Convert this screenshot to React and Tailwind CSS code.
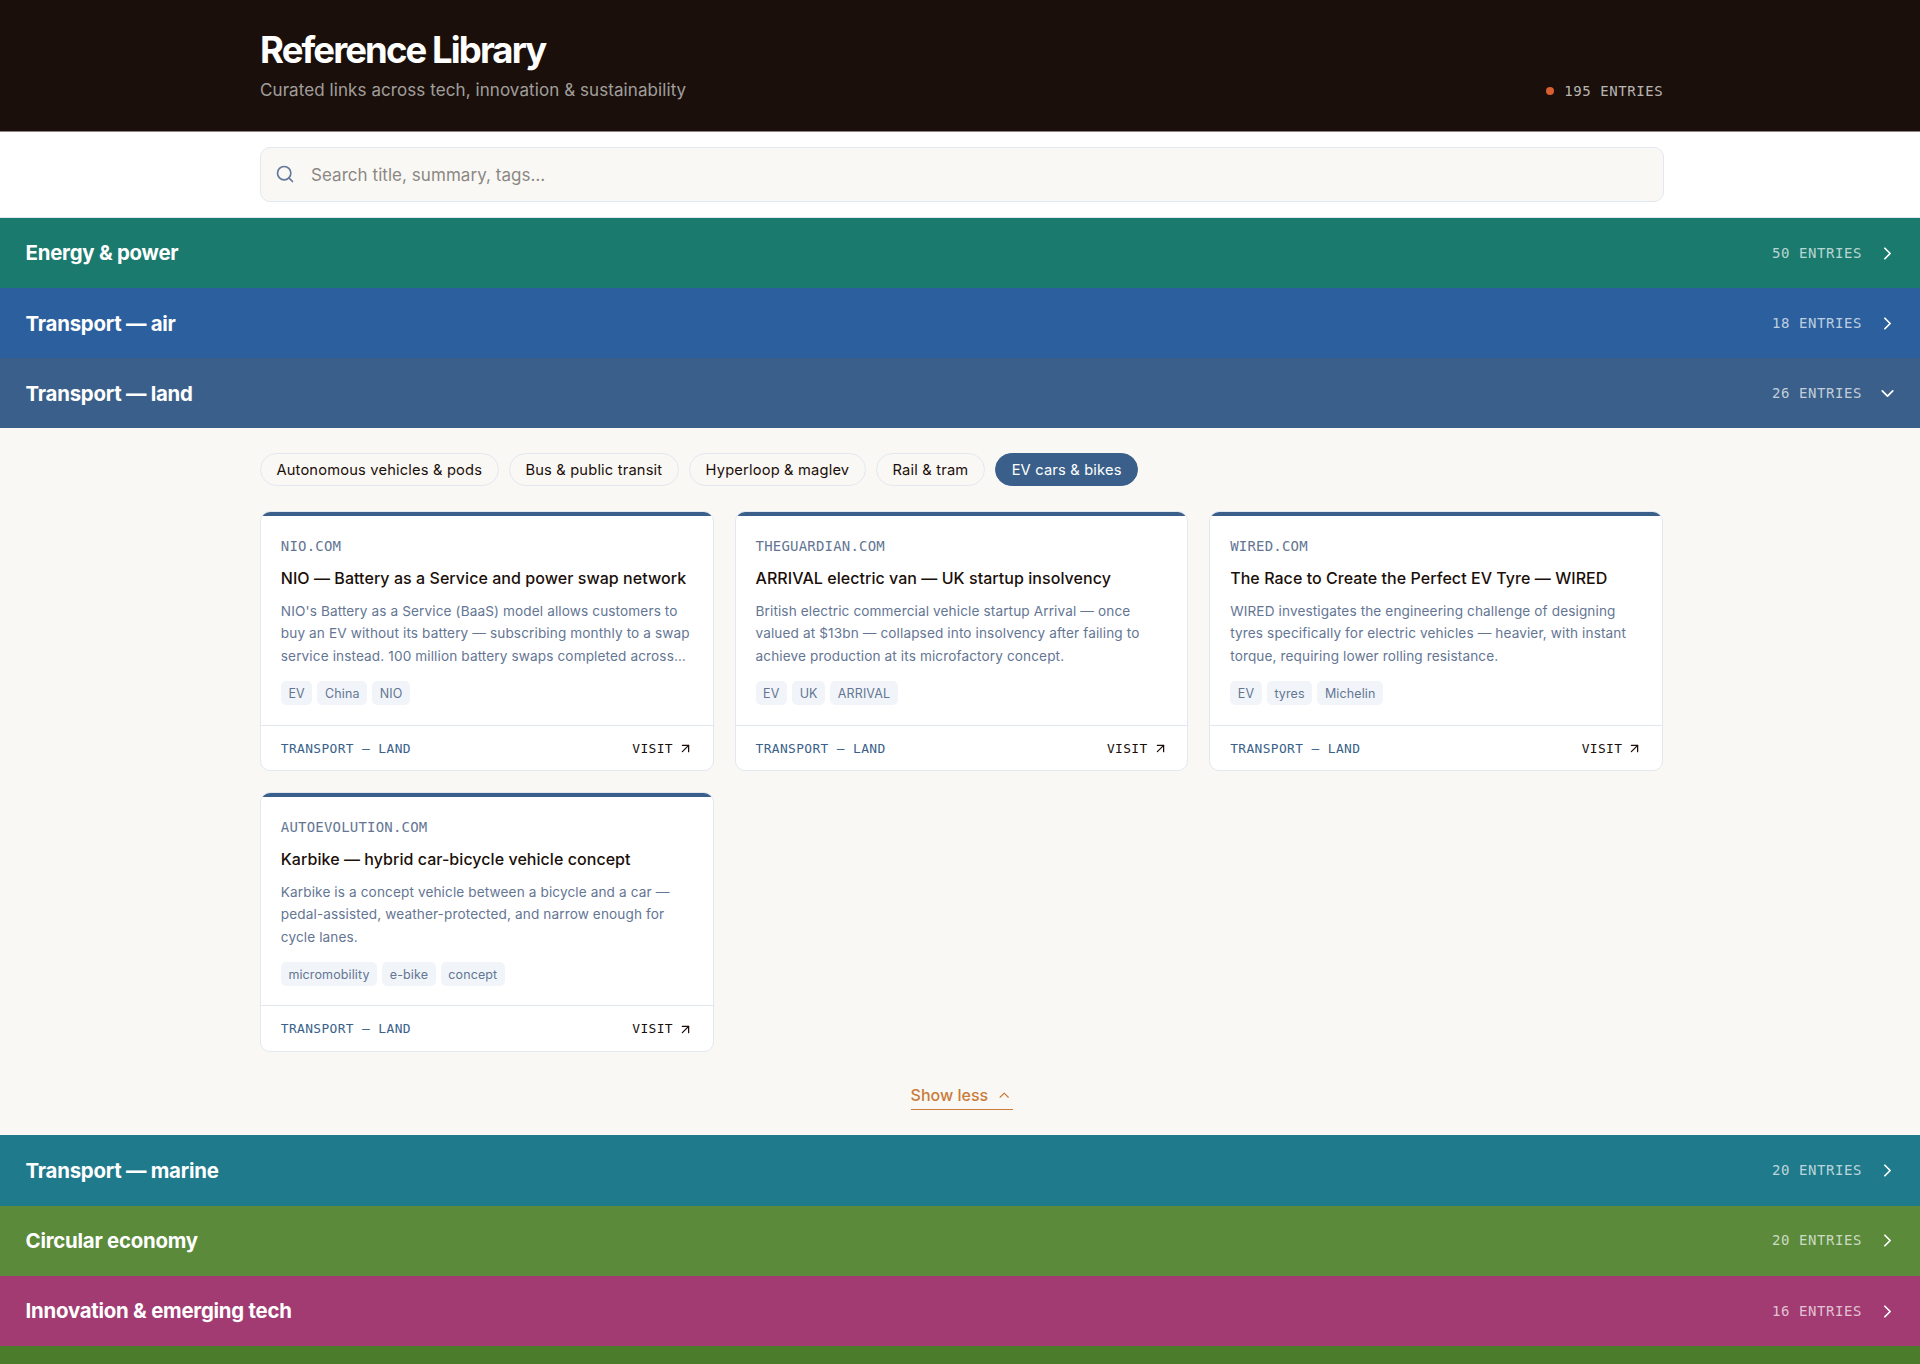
import { ArrowUpRight, ChevronDown, ChevronRight, ChevronUp, Search } from "lucide-react";

const topSections = [
  { name: "Energy & power", count: 50, color: "bg-[#1b7a6e]" },
  { name: "Transport — air", count: 18, color: "bg-[#2c5f9e]" },
  { name: "Transport — land", count: 26, color: "bg-[#3a5f8a]", open: true },
];

const bottomSections = [
  { name: "Transport — marine", count: 20, color: "bg-[#1f7a8c]" },
  { name: "Circular economy", count: 20, color: "bg-[#5a8a3a]" },
  { name: "Innovation & emerging tech", count: 16, color: "bg-[#a23b72]" },
];

const filters = ["Autonomous vehicles & pods", "Bus & public transit", "Hyperloop & maglev", "Rail & tram", "EV cars & bikes"];

const entries = [
  {
    domain: "nio.com",
    title: "NIO — Battery as a Service and power swap network",
    lines: [
      "NIO's Battery as a Service (BaaS) model allows customers to",
      "buy an EV without its battery — subscribing monthly to a swap",
      "service instead. 100 million battery swaps completed across…",
    ],
    tags: ["EV", "China", "NIO"],
  },
  {
    domain: "theguardian.com",
    title: "ARRIVAL electric van — UK startup insolvency",
    lines: [
      "British electric commercial vehicle startup Arrival — once",
      "valued at $13bn — collapsed into insolvency after failing to",
      "achieve production at its microfactory concept.",
    ],
    tags: ["EV", "UK", "ARRIVAL"],
  },
  {
    domain: "wired.com",
    title: "The Race to Create the Perfect EV Tyre — WIRED",
    lines: [
      "WIRED investigates the engineering challenge of designing",
      "tyres specifically for electric vehicles — heavier, with instant",
      "torque, requiring lower rolling resistance.",
    ],
    tags: ["EV", "tyres", "Michelin"],
  },
  {
    domain: "autoevolution.com",
    title: "Karbike — hybrid car-bicycle vehicle concept",
    lines: [
      "Karbike is a concept vehicle between a bicycle and a car —",
      "pedal-assisted, weather-protected, and narrow enough for",
      "cycle lanes.",
    ],
    tags: ["micromobility", "e-bike", "concept"],
  },
];

function SectionBar({ name, count, color, open }) {
  const Chevron = open ? ChevronDown : ChevronRight;
  return (
    <button className={`flex h-[70.2px] w-full items-center justify-between pl-[25.6px] pr-[22px] ${color}`}>
      <span className="pt-[1.6px] text-[20.4px] font-bold tracking-[-0.24px] text-white">{name}</span>
      <span className="flex items-center gap-[15px] pt-[0.6px]">
        <span className="font-['DejaVu_Sans_Mono',monospace] text-[14px] tracking-[0.56px] text-white/70">{count} ENTRIES</span>
        <Chevron className="size-[21px] text-white" strokeWidth={2} />
      </span>
    </button>
  );
}

function EntryCard({ domain, title, lines, tags }) {
  return (
    <article className="flex h-[259.7px] flex-col overflow-hidden rounded-[10px] border border-[#e2e8f0] bg-white">
      <div className="h-[4px] shrink-0 bg-[#3a5f8a]" />
      <div className="flex-1 px-[19.8px] pt-[20px]">
        <p className="font-['DejaVu_Sans_Mono',monospace] text-[14px] leading-[20px] tracking-[0.2px] text-[#647693] uppercase">{domain}</p>
        <h3 className="mt-[11px] text-[16px] leading-[22px] font-medium tracking-[0.05px] whitespace-nowrap text-[#1a0f0a]">{title}</h3>
        <p className="mt-[10.6px] text-[13.6px] leading-[22.5px] tracking-[0.12px] whitespace-nowrap text-[#647693]">
          {lines.map((line) => (
            <span key={line} className="block">{line}</span>
          ))}
        </p>
        <div className="mt-[14px] flex gap-[5px]">
          {tags.map((tag) => (
            <span key={tag} className="flex h-[24px] items-center rounded-[5px] bg-[#f1f5f9] px-[7.6px] pt-[2px] text-[12.5px] tracking-[0.12px] text-[#647693]">{tag}</span>
          ))}
        </div>
      </div>
      <div className="flex h-[45.3px] shrink-0 items-center justify-between border-t border-[#e2e8f0] px-[19.8px] pt-[1.2px] font-['DejaVu_Sans_Mono',monospace] text-[12.9px] tracking-[0.37px]">
        <span className="text-[#3a5f8a]">TRANSPORT — LAND</span>
        <span className="flex items-center gap-[5px] text-[#1a0f0a]">
          VISIT
          <ArrowUpRight className="size-[15px]" strokeWidth={2} />
        </span>
      </div>
    </article>
  );
}

export default function App() {
  return (
    <div className="h-[1364px] overflow-hidden bg-[#faf8f5] font-['Inter',sans-serif]">
      <header className="h-[132px] border-b border-[#8b8483] bg-[#1a0f0a]">
        <div className="mr-[256.8px] ml-[260px] flex h-full items-end justify-between pb-[28px]">
          <div>
            <h1 className="text-[36.5px] leading-[44px] font-bold tracking-[-1.9px] text-white">Reference Library</h1>
            <p className="mt-[6px] text-[17px] leading-[25px] tracking-[0.08px] text-white/60">Curated links across tech, innovation &amp; sustainability</p>
          </div>
          <div className="mb-[1px] flex items-center gap-[10px]">
            <span className="size-[8px] rounded-full bg-[#d95f33]" />
            <span className="font-['DejaVu_Sans_Mono',monospace] text-[14px] leading-[22px] tracking-[0.56px] text-white/70">195 ENTRIES</span>
          </div>
        </div>
      </header>

      {/* Search */}
      <div className="h-[85.8px] border-b border-[#e2e8f0] bg-white pt-[14.6px]">
        <label className="mr-[256.5px] ml-[260px] flex h-[55px] items-center gap-[16px] rounded-[10px] border border-[#e2e8f0] bg-[#faf8f5] px-[14px]">
          <Search className="size-[20px] text-[#64789b]" strokeWidth={2} />
          <input className="flex-1 pt-[3px] text-[17px] tracking-[0.05px] outline-none placeholder:text-[#8b8884]" placeholder="Search title, summary, tags…" />
        </label>
      </div>

      {topSections.map((section) => (
        <SectionBar key={section.name} {...section} />
      ))}

      {/* Open section */}
      <section className="h-[707px] pt-[24.6px] pr-[256.9px] pl-[260px]">
        <div className="flex gap-[10.5px]">
          {filters.map((filter) => (
            <button
              key={filter}
              className={`h-[32.6px] rounded-full border px-[15.4px] pt-[1px] text-[14.7px] tracking-[0.17px] whitespace-nowrap ${
                filter === "EV cars & bikes" ? "border-[#3a5f8a] bg-[#3a5f8a] text-white" : "border-[#e2e8f0] text-[#1a0f0a]"
              }`}
            >
              {filter}
            </button>
          ))}
        </div>
        <div className="mt-[25.7px] grid grid-cols-3 gap-[21px]">
          {entries.map((entry) => (
            <EntryCard key={entry.domain} {...entry} />
          ))}
        </div>
        <div className="mt-[30px] flex justify-center">
          <button className="flex h-[28.4px] items-center gap-[8px] border-b border-[#c97b3a] pb-[1px] text-[16px] font-medium text-[#c97b3a]">
            Show less
            <ChevronUp className="size-[16.4px]" strokeWidth={1.7} />
          </button>
        </div>
      </section>

      {bottomSections.map((section) => (
        <SectionBar key={section.name} {...section} />
      ))}
      <div className="h-[70.2px] bg-[#4a7c2c]" />
    </div>
  );
}
